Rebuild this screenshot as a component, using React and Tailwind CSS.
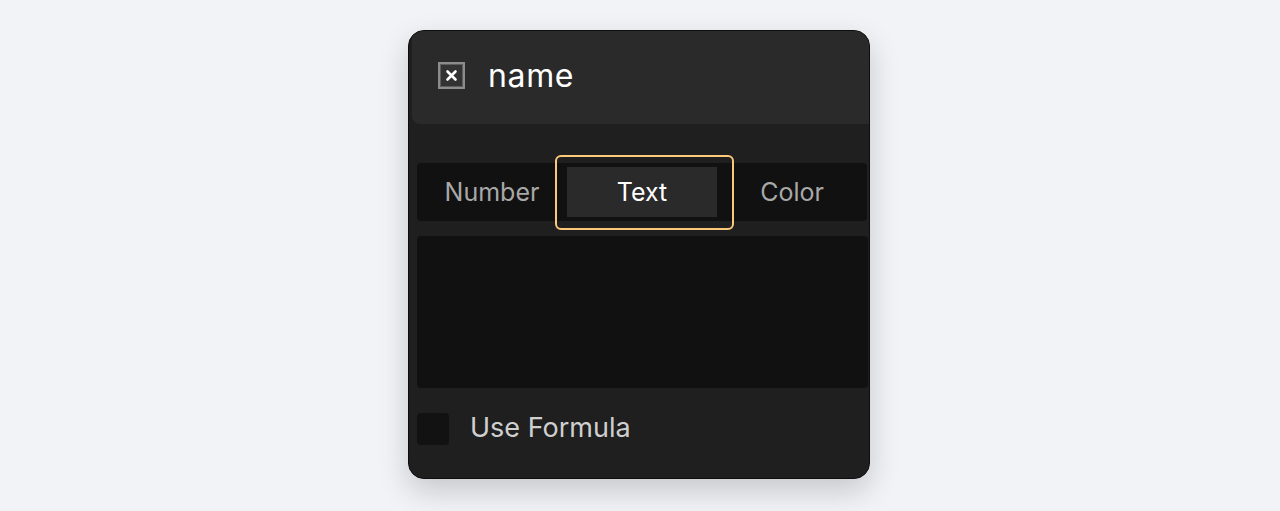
export default function App() {
  return (
    <div className="w-full h-[511px] bg-[#f2f3f7] flex justify-center pt-[30px] pr-[2px]" style={{ fontFamily: 'Inter, "Noto Sans", sans-serif' }}>
      <div className="w-[462px] h-[449px] rounded-[16px] border border-[#0e0e0e] bg-[#1f1f1f] overflow-hidden shadow-[0_12px_30px_rgba(0,0,0,0.18)] flex flex-col">
        <div className="ml-[3px] h-[93px] bg-[#2a2a2a] rounded-bl-[8px] flex items-center pl-[26px] pb-[4px]">
          <div className="w-[27px] h-[27px] border-2 border-[#8c8c8c] bg-[#333] shadow-[inset_0_0_0_1px_#5e5e5e] flex items-center justify-center">
            <svg width="13" height="13" viewBox="0 0 13 13">
              <path d="M2.5 2.5 L10.5 10.5 M10.5 2.5 L2.5 10.5" stroke="#ffffff" strokeWidth="2.6" strokeLinecap="round" />
            </svg>
          </div>
          <span className="ml-[23px] text-[32px] leading-none tracking-[0.02em] text-white">name</span>
        </div>
        <div className="ml-[8px] mr-[2px] mt-[39px] h-[58px] bg-[#111111] rounded-[4px] grid grid-cols-3 text-[25px]">
          <div className="flex items-center justify-center pt-[2px] text-[#a8a8a8]">Number</div>
          <div className="relative flex items-center justify-center">
            <div className="absolute left-[-12px] right-[-17px] top-[-8px] bottom-[-9px] rounded-[6px] border-2 border-[#fcc97a]" />
            <div className="w-full h-[50px] bg-[#2a2a2a] flex items-center justify-center pt-[2px] text-white">Text</div>
          </div>
          <div className="flex items-center justify-center pt-[2px] text-[#a8a8a8]">Color</div>
        </div>
        <div className="ml-[8px] mr-[1px] mt-[15px] h-[152px] bg-[#111111] rounded-[4px]" />
        <div className="ml-[8px] mt-[25px] flex items-center">
          <div className="w-[32px] h-[32px] rounded-[4px] bg-[#121212]" />
          <span className="ml-[21px] mb-[3px] text-[27px] leading-none text-[#cfcfcf]">Use Formula</span>
        </div>
      </div>
    </div>
  );
}
